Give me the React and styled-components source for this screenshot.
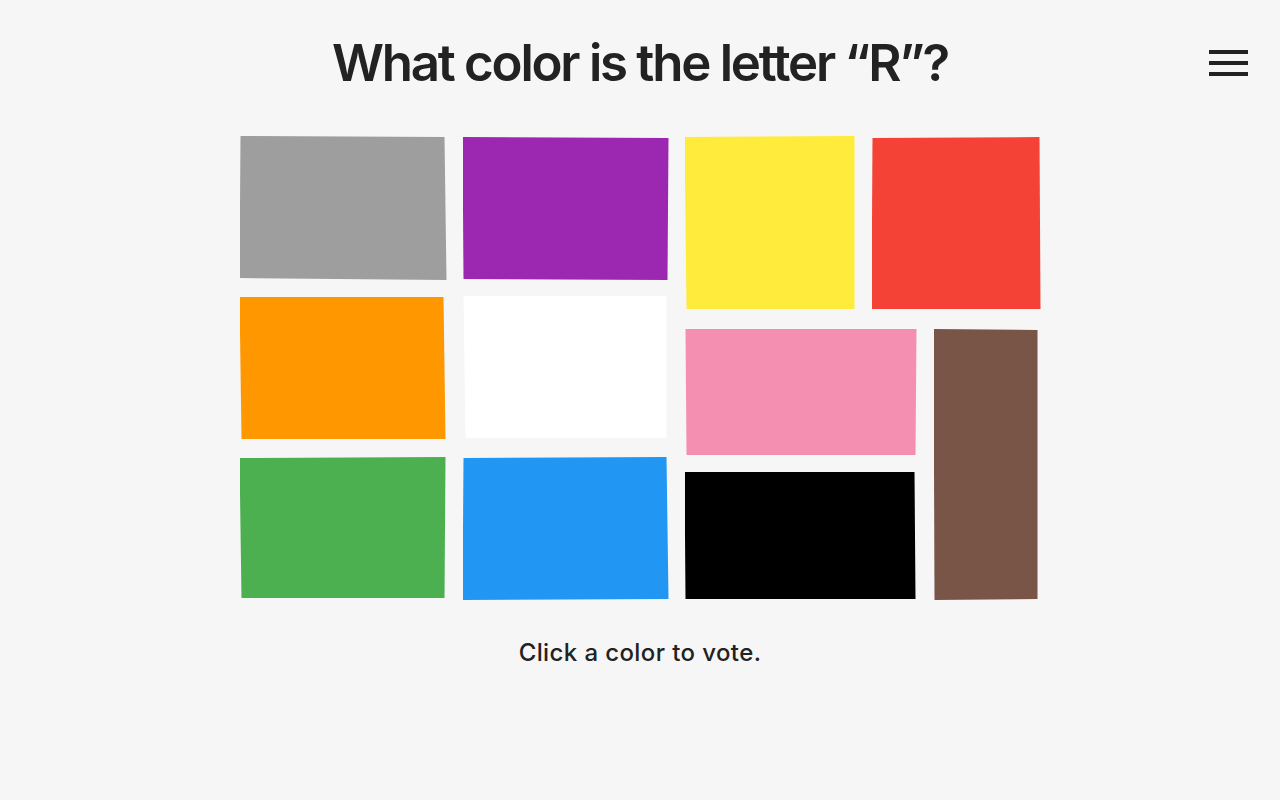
import React from "react";
import styled, { createGlobalStyle } from "styled-components";

const GlobalStyle = createGlobalStyle`
  html, body {
    margin: 0;
    padding: 0;
    background: #f6f6f6;
  }
  body {
    font-family: Inter, "Noto Sans", "Liberation Sans", sans-serif;
    color: #222;
  }
`;

// each swatch is a slightly wobbly quad, like paper cut by hand
const left = [
  { name: "gray", color: "#9e9e9e", clip: "1px 0, calc(100% - 2px) 1px, 100% 100%, 0 calc(100% - 2px)" },
  { name: "purple", color: "#9c27b0", clip: "0 1px, 100% 2px, calc(100% - 1px) 100%, 1px calc(100% - 1px)" },
  { name: "orange", color: "#ff9800", clip: "0 1px, calc(100% - 3px) 1px, calc(100% - 1px) calc(100% - 1px), 2px calc(100% - 1px)" },
  { name: "white", color: "#ffffff", clip: "1px 0, calc(100% - 2px) 0, calc(100% - 2px) calc(100% - 2px), 3px calc(100% - 2px)" },
  { name: "green", color: "#4caf50", clip: "0 1px, calc(100% - 1px) 0, calc(100% - 2px) calc(100% - 2px), 2px calc(100% - 2px)" },
  { name: "blue", color: "#2196f3", clip: "1px 1px, calc(100% - 2px) 0, 100% calc(100% - 1px), 0 100%" },
];

const App = () => {
  const vote = (name) => console.log("vote", name);

  return (
    <>
      <GlobalStyle />
      <Page>
        <Header>
          <span />
          <Title>What color is the letter “R”?</Title>
          <MenuButton aria-label="Menu">
            <MenuLine />
            <MenuLine />
            <MenuLine />
          </MenuButton>
        </Header>

        <Board>
          <LeftGrid>
            {left.map((s) => (
              <Swatch
                key={s.name}
                $color={s.color}
                $clip={s.clip}
                onClick={() => vote(s.name)}
              />
            ))}
          </LeftGrid>

          <RightArea>
            <TopPair>
              <Swatch
                $color="#ffeb3b"
                $clip="0 1px, 100% 0, 100% calc(100% - 1px), 2px calc(100% - 1px)"
                onClick={() => vote("yellow")}
              />
              <Swatch
                $color="#f44336"
                $clip="1px 2px, calc(100% - 1px) 1px, 100% calc(100% - 1px), 0 calc(100% - 1px)"
                onClick={() => vote("red")}
              />
            </TopPair>
            <BottomArea>
              <Stack>
                <Swatch
                  $color="#f48fb1"
                  $clip="1px 0, 100% 0, calc(100% - 1px) 100%, 2px 100%"
                  onClick={() => vote("pink")}
                />
                <Swatch
                  $color="#000000"
                  $clip="0 1px, calc(100% - 2px) 1px, calc(100% - 1px) calc(100% - 1px), 1px calc(100% - 1px)"
                  onClick={() => vote("black")}
                />
              </Stack>
              <Swatch
                $color="#795548"
                $clip="0 0, calc(100% - 3px) 1px, calc(100% - 3px) calc(100% - 1px), 1px 100%"
                onClick={() => vote("brown")}
              />
            </BottomArea>
          </RightArea>
        </Board>

        <Hint>Click a color to vote.</Hint>
      </Page>
    </>
  );
};

export default App;

const Page = styled.div`
  min-height: 800px;
  display: flex;
  flex-direction: column;
  align-items: center;
`;

const Header = styled.header`
  width: 100%;
  box-sizing: border-box;
  display: grid;
  grid-template-columns: 1fr auto 1fr;
  align-items: center;
  padding: 32px 32px 0 32px;
`;

const Title = styled.h1`
  margin: 0;
  font-size: 51px;
  line-height: 62px;
  font-weight: 600;
  letter-spacing: -2.25px;
  color: #222;
  white-space: nowrap;
`;

const MenuButton = styled.button`
  justify-self: end;
  display: flex;
  flex-direction: column;
  gap: 7px;
  width: 39px;
  padding: 0;
  border: none;
  background: none;
  cursor: pointer;
`;

const MenuLine = styled.span`
  display: block;
  height: 4px;
  background: #222;
`;

const Board = styled.div`
  margin-top: 42px;
  display: flex;
  gap: 16px;
  height: 464px;
`;

const LeftGrid = styled.div`
  display: grid;
  grid-template-columns: 207px 206px;
  grid-template-rows: 144px 144px 143px;
  column-gap: 16px;
  row-gap: 16px;
  & > :nth-child(n + 5) {
    margin-top: 1px;
  }
`;

const RightArea = styled.div`
  display: flex;
  flex-direction: column;
  gap: 19px;
  width: 356px;
`;

const TopPair = styled.div`
  display: grid;
  grid-template-columns: 170px 169px;
  column-gap: 17px;
  height: 174px;
`;

const BottomArea = styled.div`
  flex: 1;
  display: grid;
  grid-template-columns: 232px 107px;
  column-gap: 17px;
`;

const Stack = styled.div`
  display: grid;
  grid-template-rows: 126px 129px;
  row-gap: 16px;
`;

const Swatch = styled.button`
  display: block;
  width: 100%;
  height: 100%;
  padding: 0;
  border: none;
  background: ${(p) => p.$color};
  clip-path: polygon(${(p) => p.$clip});
  cursor: pointer;
`;

const Hint = styled.p`
  margin: 38px 0 0;
  font-size: 24px;
  line-height: 30px;
  font-weight: 500;
  letter-spacing: 0.4px;
  color: #222;
`;
